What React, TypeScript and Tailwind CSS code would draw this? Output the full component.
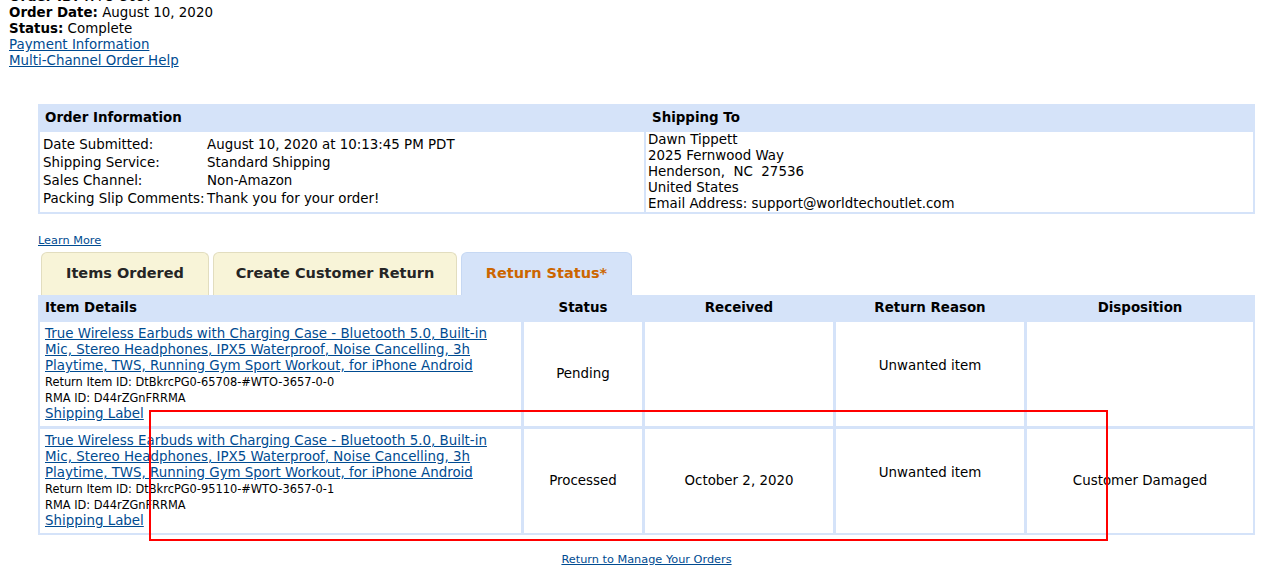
import React from "react";

const FONT = { fontFamily: '"DejaVu Sans", Verdana, sans-serif' };

const items = [
  {
    id: "DtBkrcPG0-65708-#WTO-3657-0-0",
    status: "Pending",
    received: "",
    disposition: "",
  },
  {
    id: "DtBkrcPG0-95110-#WTO-3657-0-1",
    status: "Processed",
    received: "October 2, 2020",
    disposition: "Customer Damaged",
  },
];

function Link({ children, className = "" }: { children: React.ReactNode; className?: string }) {
  return <a href="#" className={`text-[#004b91] underline ${className}`}>{children}</a>;
}

export default function App() {
  return (
    <div className="relative min-h-[579px] overflow-hidden bg-white text-black" style={FONT}>
      <div className="-mt-[11px] pl-[9px] text-[13.4px] leading-[16px]">
        <div><b>Order ID:</b> WTO-3657</div>
        <div><b>Order Date:</b> August 10, 2020</div>
        <div><b>Status:</b> Complete</div>
        <div><Link>Payment Information</Link></div>
        <div><Link>Multi-Channel Order Help</Link></div>
      </div>

      <div className="ml-[38px] mt-[35px] w-[1217px]">
        {/* Order information */}
        <div className="grid grid-cols-[604px_1fr] gap-x-[2px] bg-[#d5e3f9] px-[2px] pb-[2px] text-[13.4px]">
          <div className="flex h-[26px] items-center pl-[5px] pt-[2px] font-bold">Order Information</div>
          <div className="flex h-[26px] items-center pl-[6px] pt-[2px] font-bold">Shipping To</div>
          <div className="mt-[2px] bg-white pl-[3px] pt-[4px] leading-[18px]">
            {[
              ["Date Submitted:", "August 10, 2020 at 10:13:45 PM PDT"],
              ["Shipping Service:", "Standard Shipping"],
              ["Sales Channel:", "Non-Amazon"],
              ["Packing Slip Comments:", "Thank you for your order!"],
            ].map(([k, v]) => (
              <div key={k} className="flex">
                <span className="w-[164px] shrink-0 whitespace-nowrap">{k}</span>
                <span>{v}</span>
              </div>
            ))}
          </div>
          <div className="mt-[2px] bg-white pl-[2px] leading-[16px]">
            <div>Dawn Tippett</div>
            <div>2025 Fernwood Way</div>
            <div className="whitespace-pre">Henderson,  NC  27536</div>
            <div>United States</div>
            <div>Email Address: support@worldtechoutlet.com</div>
          </div>
        </div>

        <div className="mt-[21px] text-[11.3px] leading-[12px]">
          <Link>Learn More</Link>
        </div>

        {/* Tabs */}
        <div className="mt-[5px] flex gap-[4px] pl-[3px]">
          <div className="flex h-[43px] w-[168px] items-center justify-center rounded-t-[6px] border border-b-0 border-[#e2ddbf] bg-[#f8f4d8] text-[14.5px] font-bold text-[#252525]">
            Items Ordered
          </div>
          <div className="flex h-[43px] w-[244px] items-center justify-center rounded-t-[6px] border border-b-0 border-[#e2ddbf] bg-[#f8f4d8] text-[14.5px] font-bold text-[#252525]">
            Create Customer Return
          </div>
          <div className="flex h-[43px] w-[171px] items-center justify-center rounded-t-[6px] border border-b-0 border-[#c6d8f3] bg-[#d5e3f9] text-[14.5px] font-bold text-[#cc6600]">
            Return Status*
          </div>
        </div>

        {/* Items table */}
        <div className="grid grid-cols-[481px_118px_188px_188px_1fr] gap-x-[3px] gap-y-[3px] bg-[#d5e3f9] px-[2px] pb-[2px] text-[13.4px]">
          <div className="flex h-[24px] items-center pl-[5px] pt-[2px] font-bold">Item Details</div>
          <div className="flex h-[24px] items-center justify-center pt-[2px] font-bold">Status</div>
          <div className="flex h-[24px] items-center justify-center pt-[2px] font-bold">Received</div>
          <div className="flex h-[24px] items-center justify-center pt-[2px] font-bold">Return Reason</div>
          <div className="flex h-[24px] items-center justify-center pt-[2px] font-bold">Disposition</div>

          {items.map((it) => (
            <React.Fragment key={it.id}>
              <div className="bg-white py-[4px] pl-[5px] pr-[20px] leading-[16px]">
                <Link>
                  True Wireless Earbuds with Charging Case - Bluetooth 5.0, Built-in Mic, Stereo Headphones, IPX5 Waterproof, Noise Cancelling, 3h Playtime, TWS, Running Gym Sport Workout, for iPhone Android
                </Link>
                <div className="text-[11.4px]">Return Item ID: {it.id}</div>
                <div className="text-[11.4px]">RMA ID: D44rZGnFRRMA</div>
                <Link>Shipping Label</Link>
              </div>
              <div className="flex items-center justify-center bg-white">{it.status}</div>
              <div className="flex items-center justify-center bg-white">{it.received}</div>
              <div className="flex items-center justify-center bg-white pb-[16px]">Unwanted item</div>
              <div className="flex items-center justify-center bg-white">{it.disposition}</div>
            </React.Fragment>
          ))}
        </div>

        <div className="mt-[18px] text-center text-[11.3px] leading-[14px]">
          <Link>Return to Manage Your Orders</Link>
        </div>
      </div>

      {/* annotation */}
      <div className="pointer-events-none absolute left-[149px] top-[410px] h-[131px] w-[959px] border-2 border-[#ff0000]" />
    </div>
  );
}
